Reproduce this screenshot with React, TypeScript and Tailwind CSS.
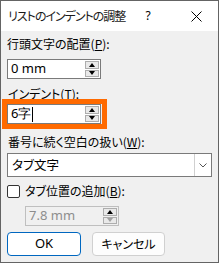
import React from 'react'

const font = "font-['Yu_Gothic_UI','Noto_Sans_CJK_JP',sans-serif] [font-feature-settings:'palt']"

function Spinner({ disabled = false }: { disabled?: boolean }) {
  const down = disabled ? 'border-t-[#a0a0a0]' : 'border-t-[#000]'
  return (
    <div className="flex flex-col gap-[1px] w-[15px] h-full py-[1px] pr-[1px]">
      <div className="flex-1 flex items-center justify-center border border-[#adadad] bg-[#e9e9e9]">
        <div className="w-0 h-0 border-x-[3.5px] border-x-transparent border-b-[4px] border-b-[#000]" />
      </div>
      <div className="flex-1 flex items-center justify-center border border-[#adadad] bg-[#e9e9e9]">
        <div className={`w-0 h-0 border-x-[3.5px] border-x-transparent border-t-[4px] ${down}`} />
      </div>
    </div>
  )
}

function SpinBox({ value, cursor = false, disabled = false }: { value: string; cursor?: boolean; disabled?: boolean }) {
  return (
    <div className={`flex items-stretch w-[94px] h-[20px] border ${disabled ? 'border-[#bfbfbf] bg-[#f0f0f0]' : 'border-[#7a7a7a] bg-white'}`}>
      <div className={`flex-1 flex items-center pl-[3px] text-[13px] ${disabled ? 'text-[#8d8d8d]' : 'text-black'}`}>
        <span className="font-['Noto_Sans','Liberation_Sans',sans-serif]">{value}</span>
        {cursor && <span className="w-[1px] h-[15px] bg-black ml-[1px]" />}
      </div>
      <Spinner disabled={disabled} />
    </div>
  )
}

export default function App() {
  return (
    <div className={`w-[219px] h-[263px] border border-[#646464] bg-[#f0f0f0] flex flex-col text-[12px] text-black ${font}`}>
      <div className="h-[30px] bg-white flex items-center pl-[7px]">
        <span className="flex-1 whitespace-nowrap text-[12px] tracking-[-1px] text-[#1a1a1a]">リストのインデントの調整</span>
        <span className="w-[14px] text-center mr-[36px] font-['Noto_Sans',sans-serif]">?</span>
        <svg width="11" height="11" viewBox="0 0 11 11" className="mr-[16px]">
          <path d="M0.5 0.5L10.5 10.5M10.5 0.5L0.5 10.5" stroke="#000" strokeWidth="1" />
        </svg>
      </div>
      <div className="flex flex-col px-[6px]">
        <div className="mt-[4px] h-[18px] leading-[18px]">
          行頭文字の配置(<span className="underline">P</span>):
        </div>
        <div className="mt-[6px]">
          <SpinBox value="0 mm" />
        </div>
        <div className="mt-[6px] h-[18px] leading-[18px] pl-[1px]">
          インデント(<span className="underline">T</span>):
        </div>
        <div className="-mt-[4px] -ml-[5px] w-[105px] border-[5px] border-[#ff6a00]">
          <SpinBox value="6字" cursor />
        </div>
        <div className="mt-[4px] h-[18px] leading-[18px] pl-[1px]">
          番号に続く空白の扱い(<span className="underline">W</span>):
        </div>
        <div className="mt-[2px] flex items-stretch w-[205px] h-[24px] border border-[#7a7a7a] bg-white">
          <div className="flex-1 flex items-center pl-[4px] text-[12.5px]">タブ文字</div>
          <div className="w-[17px] border-l border-[#d0d0d0] flex items-center justify-center">
            <svg width="8" height="5" viewBox="0 0 8 5">
              <path d="M0.5 0.5L4 4L7.5 0.5" stroke="#555" strokeWidth="1" fill="none" />
            </svg>
          </div>
        </div>
        <div className="mt-[6px] flex items-center h-[16px]">
          <div className="w-[13px] h-[13px] border border-[#333] rounded-[2px] bg-white" />
          <span className="ml-[5px]">タブ位置の追加(<span className="underline">B</span>):</span>
        </div>
        <div className="mt-[7px] ml-[18px]">
          <SpinBox value="7.8 mm" disabled />
        </div>
        <div className="mt-[6px] flex gap-[11px]">
          <div className="w-[74px] h-[24px] rounded-[4px] border-[1.5px] border-[#0067c0] bg-white flex items-center justify-center text-[13px] font-['Noto_Sans',sans-serif]">
            OK
          </div>
          <div className="w-[73px] h-[24px] rounded-[4px] border border-[#d0d0d0] bg-[#fdfdfd] flex items-center justify-center">
            キャンセル
          </div>
        </div>
      </div>
    </div>
  )
}
